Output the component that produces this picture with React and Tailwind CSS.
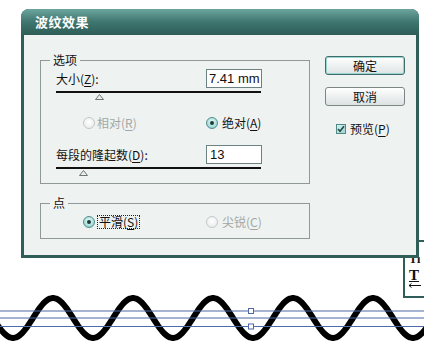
import React from "react";

function U({ children }) {
  return <span className="underline underline-offset-[2px]">{children}</span>;
}

function Radio({ checked, disabled }) {
  if (checked) {
    return (
      <span className="w-[12px] h-[12px] rounded-full border border-[#4f8f8c] bg-[radial-gradient(circle_at_50%_40%,#effcfb_0%,#a3dbd7_65%,#6cb5b0_100%)] flex items-center justify-center shrink-0">
        <span className="w-[4px] h-[4px] rounded-full bg-[#1d3b39]" />
      </span>
    );
  }
  return (
    <span
      className={
        disabled
          ? "w-[12px] h-[12px] rounded-full border border-[#c3c9c8] bg-[radial-gradient(circle_at_50%_40%,#ffffff_0%,#e4e8e8_100%)] shrink-0"
          : "w-[12px] h-[12px] rounded-full border border-[#6f8f8c] bg-white shrink-0"
      }
    />
  );
}

function Tri() {
  return (
    <svg width="9" height="6" viewBox="0 0 9 6" className="block">
      <polygon points="4.5,0.5 8.5,5.5 0.5,5.5" fill="#e9eded" stroke="#6f7574" strokeWidth="1" />
    </svg>
  );
}

export default function App() {
  const pts = [];
  for (let x = -10; x <= 434; x += 2) {
    const y = 60 - 20 * Math.cos((2 * Math.PI * (x - 53)) / 80);
    pts.push(`${x},${y.toFixed(2)}`);
  }

  return (
    <div className="relative w-[424px] h-[346px] bg-white overflow-hidden font-['Noto_Sans_CJK_SC',sans-serif] text-[12px] leading-[14px] text-[#111]">
      {/* partially visible panel behind dialog */}
      <div className="absolute left-[403px] top-[240px] w-[30px] h-[58px] border-2 border-[#2f5e58] bg-white font-['Liberation_Serif',serif] text-[#111]">
        <div className="pl-[4px] pt-[11px] text-[12px] leading-[12px] font-bold">Tı</div>
        <div className="pl-[4px] pt-[4px] text-[15px] leading-[13px] font-bold underline">T</div>
        <svg width="14" height="5" viewBox="0 0 14 5" className="block ml-[3px] mt-[1px]">
          <path d="M1 2.5 H13 M1 2.5 L3.5 0.5 M1 2.5 L3.5 4.5" stroke="#111" strokeWidth="1" fill="none" />
        </svg>
      </div>

      {/* dialog */}
      <div className="relative z-10 ml-[21px] mt-[9px] w-[398px] h-[249px] flex flex-col rounded-t-[8px] bg-[#2f5e58] px-[3px] pb-[3px]">
        <div className="h-[26px] -mx-[3px] rounded-t-[8px] bg-gradient-to-b from-[#6da69f] via-[#3e766f] to-[#2e5d57] flex items-center pl-[14px]">
          <span className="text-white font-bold text-[13px] leading-[16px] tracking-[0.5px]">波纹效果</span>
        </div>
        <div className="flex-1 bg-[#eef2f1] flex">
          {/* left column */}
          <div className="pl-[16px] pt-[18px] flex flex-col">
            <fieldset className="w-[270px] h-[131px] border border-[#8f9997] flex flex-col">
              <legend className="ml-[9px] px-[3px] leading-[14px]">选项</legend>
              <div className="mt-[2px] h-[19px] flex items-center justify-between pl-[15px] pr-[47px]">
                <span>
                  大小(<U>Z</U>):
                </span>
                <div className="w-[56px] h-[19px] border border-[#6b8280] bg-white flex items-center pl-[2px] font-['Liberation_Sans',sans-serif] text-[13px]">
                  7.41 mm
                </div>
              </div>
              <div className="ml-[15px] mt-[3px] w-[205px] h-[2px] bg-[#111]" />
              <div className="ml-[54px] mt-[1px]">
                <Tri />
              </div>
              <div className="mt-[16px] h-[14px] flex items-center pl-[42px]">
                <div className="w-[123px] flex items-center gap-[2px] text-[#a3a8a7]">
                  <Radio disabled />
                  <span>
                    相对(<U>R</U>)
                  </span>
                </div>
                <div className="flex items-center gap-[4px]">
                  <Radio checked />
                  <span>
                    绝对(<U>A</U>)
                  </span>
                </div>
              </div>
              <div className="mt-[15px] h-[19px] flex items-center justify-between pl-[15px] pr-[47px]">
                <span>
                  每段的隆起数(<U>D</U>):
                </span>
                <div className="w-[56px] h-[19px] border border-[#6b8280] bg-white flex items-center pl-[3px] font-['Liberation_Sans',sans-serif] text-[13px]">
                  13
                </div>
              </div>
              <div className="ml-[15px] mt-[3px] w-[205px] h-[2px] bg-[#111]" />
              <div className="ml-[38px] mt-[1px]">
                <Tri />
              </div>
            </fieldset>

            <fieldset className="mt-[12px] w-[270px] h-[43px] border border-[#8f9997] flex flex-col">
              <legend className="ml-[9px] px-[3px] leading-[14px]">点</legend>
              <div className="mt-[5px] h-[14px] flex items-center pl-[42px]">
                <div className="w-[123px] flex items-center gap-[2px]">
                  <Radio checked />
                  <span className="border border-dotted border-[#222] px-[1px] leading-[12px]">
                    平滑(<U>S</U>)
                  </span>
                </div>
                <div className="flex items-center gap-[4px] text-[#a3a8a7]">
                  <Radio disabled />
                  <span>
                    尖锐(<U>C</U>)
                  </span>
                </div>
              </div>
            </fieldset>
          </div>

          {/* right column */}
          <div className="ml-[15px] pt-[21px] flex flex-col">
            <div className="w-[80px] h-[19px] rounded-[3px] border border-[#3f6e6a] shadow-[inset_0_0_0_1px_#9ad6d1] bg-gradient-to-b from-[#ffffff] to-[#dde4e3] flex items-center justify-center">
              确定
            </div>
            <div className="mt-[12px] w-[80px] h-[19px] rounded-[3px] border border-[#7b8685] bg-gradient-to-b from-[#ffffff] to-[#dce1e1] flex items-center justify-center">
              取消
            </div>
            <div className="mt-[16px] ml-[11px] h-[14px] flex items-center gap-[4px]">
              <span className="w-[10px] h-[10px] border border-[#4f8a86] bg-gradient-to-br from-[#d8f1ef] to-[#9fd3cf] flex items-center justify-center">
                <svg width="8" height="8" viewBox="0 0 8 8">
                  <path d="M1 4 L3 6.2 L7 1.2" fill="none" stroke="#1f4a47" strokeWidth="1.6" />
                </svg>
              </span>
              <span>
                预览(<U>P</U>)
              </span>
            </div>
          </div>
        </div>
      </div>

      {/* artwork below */}
      <svg width="424" height="88" viewBox="0 0 424 88" className="block">
        <polyline points={pts.join(" ")} fill="none" stroke="#000" strokeWidth="6" strokeLinejoin="round" />
        <line x1="0" y1="53" x2="424" y2="53" stroke="#4d69a6" strokeWidth="1" />
        <line x1="0" y1="60" x2="424" y2="60" stroke="#4d69a6" strokeWidth="1" />
        <line x1="0" y1="68.5" x2="424" y2="68.5" stroke="#4d69a6" strokeWidth="1" />
        <rect x="248.5" y="50.5" width="5" height="5" fill="#fff" stroke="#4d69a6" strokeWidth="1" />
        <rect x="248.5" y="66" width="5" height="5" fill="#fff" stroke="#4d69a6" strokeWidth="1" />
      </svg>
    </div>
  );
}
